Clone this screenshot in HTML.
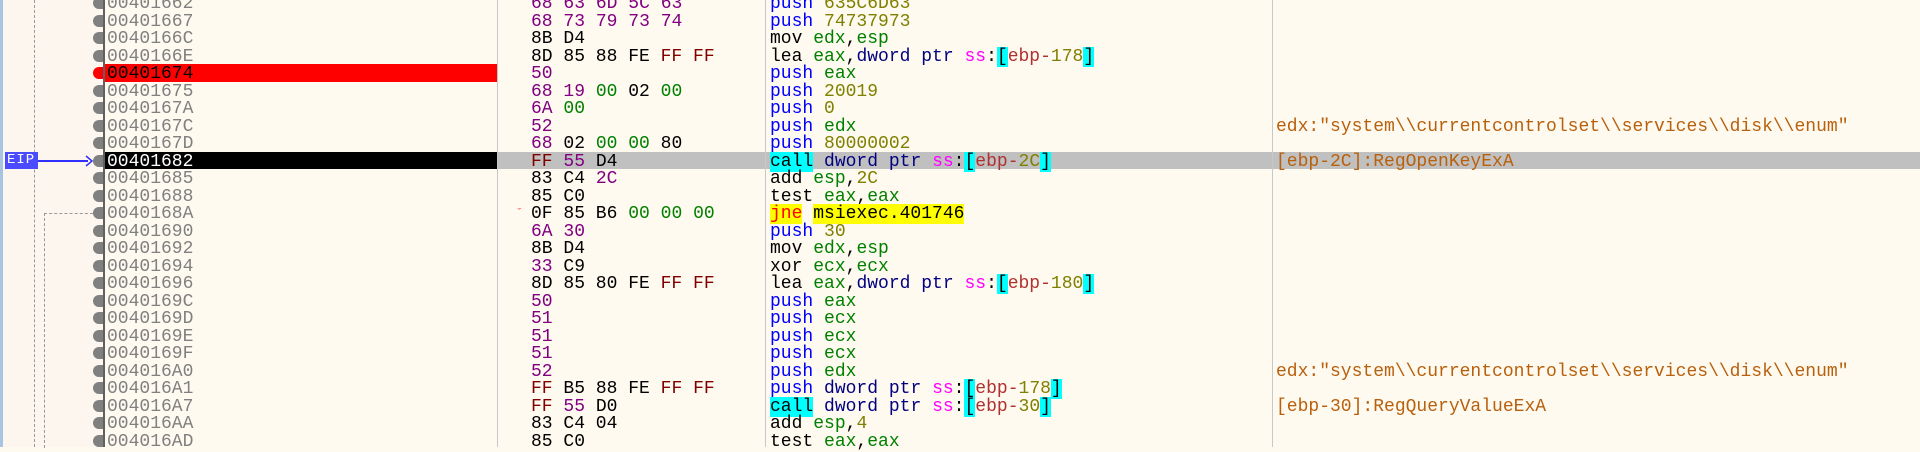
<!DOCTYPE html>
<html><head><meta charset="utf-8"><style>
*{margin:0;padding:0;box-sizing:border-box}
body{width:1920px;height:447px;overflow:hidden;background:#fffaf0;position:relative;font-family:"Liberation Mono",monospace}
.side{position:absolute;left:0;top:0;width:103px;height:447px;background:#fdf6ee}
.blue{position:absolute;left:0;top:0;width:3px;height:447px;background:#a8c4e4}
.vl{position:absolute;top:0;height:447px;width:1px;background:#c8c8c8;z-index:2}
.row{position:absolute;left:0;width:1920px;height:17.5px}
.a,.b,.d,.c{top:2px}
.a{position:absolute;left:107px;font-size:18px;line-height:17.5px;color:#808080}
.b{position:absolute;left:531px;font-size:18px;line-height:17.5px;white-space:pre}
.d{position:absolute;left:770px;font-size:18px;line-height:17.5px;white-space:pre;color:#000}
.c{position:absolute;left:1276px;font-size:18px;line-height:17.5px;white-space:pre;color:#b8600c}
.dot{position:absolute;left:93px;top:3px;width:12px;height:12px;border-radius:6px 0 0 6px;background:#808080}
.p{color:#800080}.k{color:#000}.r{color:#800000}.g{color:#008000}
.bl{color:#0000ff}.nv{color:#000080}.ss{color:#ff00ff}.o{color:#808000}.er{color:#b03030}
.cy{background:#00ffff}
</style></head><body>
<div class="side"></div><div class="blue"></div>
<div style="position:absolute;left:34px;top:0;height:447px;border-left:1px dashed #999"></div>
<div style="position:absolute;left:44px;top:213px;height:235px;border-left:1px dashed #999"></div>
<div style="position:absolute;left:44px;top:213px;width:49px;border-top:1px dashed #999"></div>
<div id="rows"></div>
<div class="vl" style="left:103px;width:2px;background:#606060"></div>
<div class="vl" style="left:497px"></div>
<div class="vl" style="left:765px"></div>
<div class="vl" style="left:1272px"></div>
<script>
var R=[
["00401662",'<span class="p">68</span> <span class="p">63</span> <span class="p">6D</span> <span class="p">5C</span> <span class="p">63</span>','<span class="bl">push</span> <span class="o">635C6D63</span>',''],
["00401667",'<span class="p">68</span> <span class="p">73</span> <span class="p">79</span> <span class="p">73</span> <span class="p">74</span>','<span class="bl">push</span> <span class="o">74737973</span>',''],
["0040166C",'8B D4','mov <span class="g">edx</span>,<span class="g">esp</span>',''],
["0040166E",'8D 85 88 FE <span class="r">FF</span> <span class="r">FF</span>','lea <span class="g">eax</span>,<span class="nv">dword ptr</span> <span class="ss">ss</span>:<span class="cy">[</span><span class="er">ebp-</span><span class="o">178</span><span class="cy">]</span>',''],
["00401674",'<span class="p">50</span>','<span class="bl">push</span> <span class="g">eax</span>','','red'],
["00401675",'<span class="p">68</span> <span class="p">19</span> <span class="g">00</span> 02 <span class="g">00</span>','<span class="bl">push</span> <span class="o">20019</span>',''],
["0040167A",'<span class="p">6A</span> <span class="g">00</span>','<span class="bl">push</span> <span class="o">0</span>',''],
["0040167C",'<span class="p">52</span>','<span class="bl">push</span> <span class="g">edx</span>','edx:"system\\\\currentcontrolset\\\\services\\\\disk\\\\enum"'],
["0040167D",'<span class="p">68</span> 02 <span class="g">00</span> <span class="g">00</span> 80','<span class="bl">push</span> <span class="o">80000002</span>',''],
["00401682",'<span class="r">FF</span> <span class="p">55</span> D4','<span class="cy">call</span> <span class="nv">dword ptr</span> <span class="ss">ss</span>:<span class="cy">[</span><span class="er">ebp-</span><span class="o">2C</span><span class="cy">]</span>','[ebp-2C]:RegOpenKeyExA','eip'],
["00401685",'83 C4 <span class="p">2C</span>','add <span class="g">esp</span>,<span class="o">2C</span>',''],
["00401688",'85 C0','test <span class="g">eax</span>,<span class="g">eax</span>',''],
["0040168A",'0F 85 B6 <span class="g">00</span> <span class="g">00</span> <span class="g">00</span>','<span style="background:#ffff00;color:#ff0000">jne</span> <span style="background:#ffff00">msiexec.401746</span>',''],
["00401690",'<span class="p">6A</span> <span class="p">30</span>','<span class="bl">push</span> <span class="o">30</span>',''],
["00401692",'8B D4','mov <span class="g">edx</span>,<span class="g">esp</span>',''],
["00401694",'<span class="p">33</span> C9','xor <span class="g">ecx</span>,<span class="g">ecx</span>',''],
["00401696",'8D 85 80 FE <span class="r">FF</span> <span class="r">FF</span>','lea <span class="g">eax</span>,<span class="nv">dword ptr</span> <span class="ss">ss</span>:<span class="cy">[</span><span class="er">ebp-</span><span class="o">180</span><span class="cy">]</span>',''],
["0040169C",'<span class="p">50</span>','<span class="bl">push</span> <span class="g">eax</span>',''],
["0040169D",'<span class="p">51</span>','<span class="bl">push</span> <span class="g">ecx</span>',''],
["0040169E",'<span class="p">51</span>','<span class="bl">push</span> <span class="g">ecx</span>',''],
["0040169F",'<span class="p">51</span>','<span class="bl">push</span> <span class="g">ecx</span>',''],
["004016A0",'<span class="p">52</span>','<span class="bl">push</span> <span class="g">edx</span>','edx:"system\\\\currentcontrolset\\\\services\\\\disk\\\\enum"'],
["004016A1",'<span class="r">FF</span> B5 88 FE <span class="r">FF</span> <span class="r">FF</span>','<span class="bl">push</span> <span class="nv">dword ptr</span> <span class="ss">ss</span>:<span class="cy">[</span><span class="er">ebp-</span><span class="o">178</span><span class="cy">]</span>',''],
["004016A7",'<span class="r">FF</span> <span class="p">55</span> D0','<span class="cy">call</span> <span class="nv">dword ptr</span> <span class="ss">ss</span>:<span class="cy">[</span><span class="er">ebp-</span><span class="o">30</span><span class="cy">]</span>','[ebp-30]:RegQueryValueExA'],
["004016AA",'83 C4 04','add <span class="g">esp</span>,<span class="o">4</span>',''],
["004016AD",'85 C0','test <span class="g">eax</span>,<span class="g">eax</span>','']
];
var h='';
R.forEach(function(r,i){
 var t=(-5.7+i*17.5).toFixed(2);
 var ex='',ac='';
 if(r[4]=='red'){ex='<div style="position:absolute;left:105px;top:0;width:392px;height:17.5px;background:#ff0000"></div>';ac='color:#000';}
 if(r[4]=='eip'){ex='<div style="position:absolute;left:497px;top:0;width:1423px;height:17.5px;background:#c0c0c0"></div><div style="position:absolute;left:105px;top:0;width:392px;height:17.5px;background:#000"></div>';ac='color:#fff';}
 var dot='<div class="dot"'+(r[4]=='red'?' style="background:#ff0000"':'')+'></div>';
 var mark=(i==12)?'<span style="position:absolute;left:516px;top:2px;font-size:11px;line-height:17.5px;color:#ff4040">&#711;</span>':'';
 h+='<div class="row" style="top:'+t+'px">'+ex+dot+'<span class="a" style="'+ac+'">'+r[0]+'</span>'+mark+'<span class="b">'+r[1]+'</span><span class="d">'+r[2]+'</span><span class="c">'+r[3]+'</span></div>';
});
document.getElementById('rows').innerHTML=h;
</script>
<div style="position:absolute;left:5px;top:152px;width:33px;height:17px;background:#4a4aff;color:#fff;font-size:14px;line-height:17px;padding-left:2px;letter-spacing:1px">EIP</div>
<div style="position:absolute;left:38px;top:160px;width:50px;height:1.5px;background:#3030ff"></div>
<svg style="position:absolute;left:84px;top:155px" width="10" height="12"><path d="M2 1 L8 6 L2 11" fill="none" stroke="#3030ff" stroke-width="1.5"/></svg>
</body></html>
